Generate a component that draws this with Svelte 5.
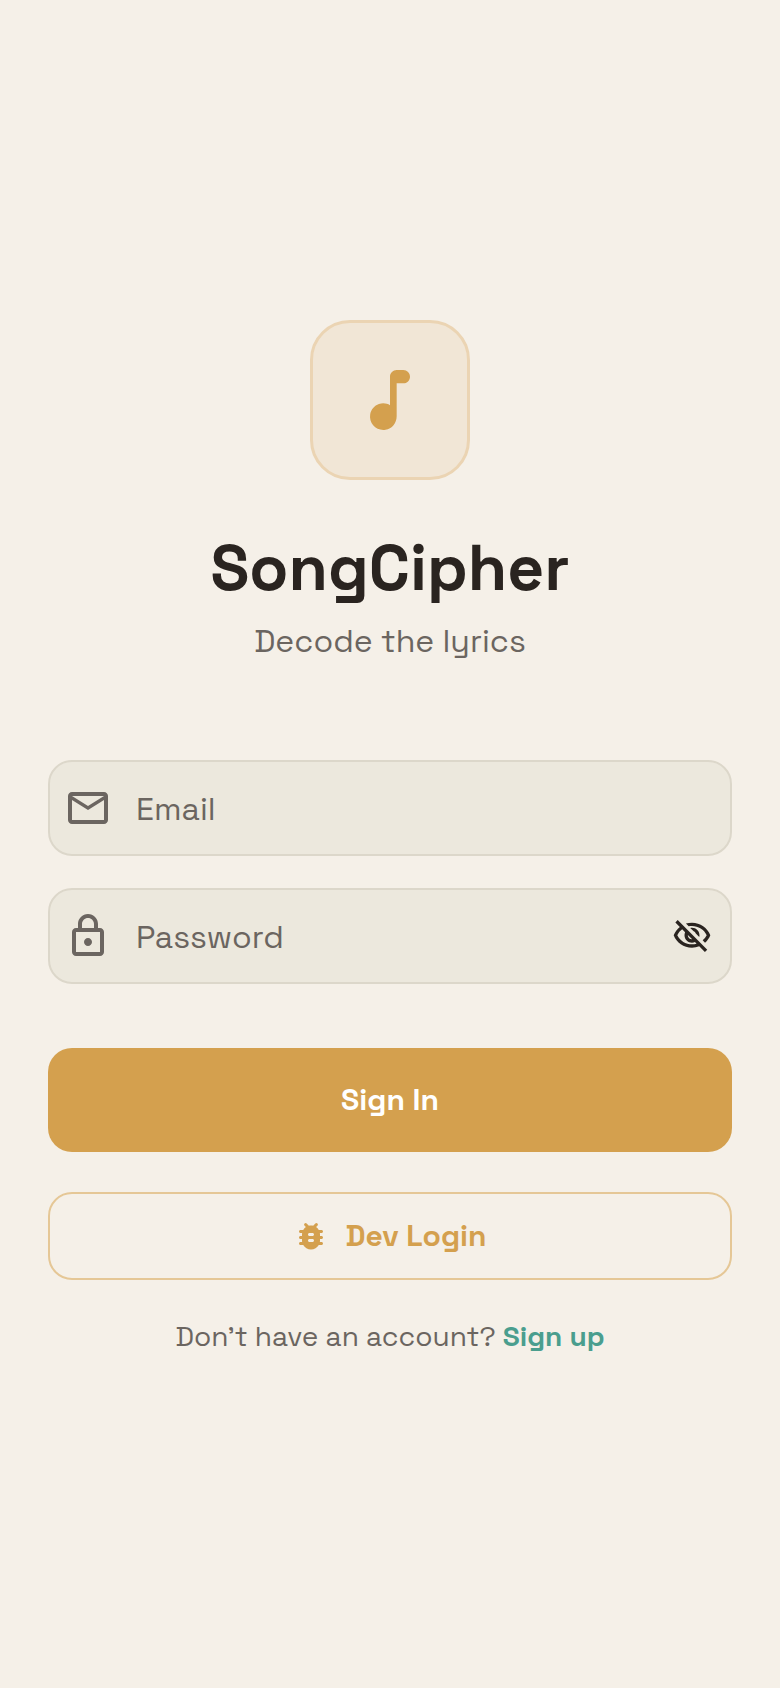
<script lang="ts">
    let email = $state('');
    let password = $state('');
    let visible = $state(false);

    function signIn(event: SubmitEvent) {
        event.preventDefault();
    }
</script>

<main>
    <header>
        <div class="logo">
            <svg viewBox="0 0 24 24" aria-hidden="true">
                <path d="M12 5v8.55c-.94-.54-2.1-.75-3.33-.32-1.34.48-2.37 1.67-2.61 3.07-.46 2.74 1.86 5.08 4.59 4.65 1.96-.31 3.35-2.11 3.35-4.1V7h2c1.1 0 2-.9 2-2s-.9-2-2-2h-2c-1.1 0-2 .9-2 2z" />
            </svg>
        </div>
        <h1>SongCipher</h1>
        <p class="tagline">Decode the lyrics</p>
    </header>

    <form onsubmit={signIn}>
        <div class="field">
            <svg viewBox="0 0 24 24" aria-hidden="true">
                <path d="M22 6c0-1.1-.9-2-2-2H4c-1.1 0-2 .9-2 2v12c0 1.1.9 2 2 2h16c1.1 0 2-.9 2-2V6zm-2 0l-8 5-8-5h16zm0 12H4V8l8 5 8-5v10z" />
            </svg>
            <input type="email" placeholder="Email" aria-label="Email" bind:value={email} />
        </div>

        <div class="field">
            <svg viewBox="0 0 24 24" aria-hidden="true">
                <path d="M18 8h-1V6c0-2.76-2.24-5-5-5S7 3.24 7 6v2H6c-1.1 0-2 .9-2 2v10c0 1.1.9 2 2 2h12c1.1 0 2-.9 2-2V10c0-1.1-.9-2-2-2zM9 6c0-1.66 1.34-3 3-3s3 1.34 3 3v2H9V6zm9 14H6V10h12v10zm-6-3c1.1 0 2-.9 2-2s-.9-2-2-2-2 .9-2 2 .9 2 2 2z" />
            </svg>
            <input
                type={visible ? 'text' : 'password'}
                placeholder="Password"
                aria-label="Password"
                bind:value={password}
            />
            <button
                type="button"
                class="toggle"
                aria-label="Show password"
                aria-pressed={visible}
                onclick={() => (visible = !visible)}
            >
                <svg viewBox="0 0 24 24" aria-hidden="true">
                    <path d="M12 6c3.79 0 7.17 2.13 8.82 5.5-.59 1.22-1.42 2.27-2.41 3.12l1.41 1.41c1.39-1.23 2.49-2.77 3.18-4.53C21.27 7.11 17 4 12 4c-1.27 0-2.49.2-3.64.57l1.65 1.65C10.66 6.09 11.32 6 12 6zm-1.07 1.14L13 9.21c.57.25 1.03.71 1.28 1.28l2.07 2.07c.08-.34.14-.7.14-1.07C16.5 9.01 14.48 7 12 7c-.37 0-.72.05-1.07.14zM2.01 3.87l2.68 2.68C3.06 7.83 1.77 9.53 1 11.5 2.73 15.89 7 19 12 19c1.52 0 2.98-.29 4.32-.82l3.42 3.42 1.41-1.41L3.42 2.45 2.01 3.87zm7.5 7.5l2.61 2.61c-.04.01-.08.02-.12.02-1.38 0-2.5-1.12-2.5-2.5 0-.05.01-.08.01-.13zm-3.4-3.4l1.75 1.75c-.23.55-.36 1.15-.36 1.78 0 2.48 2.02 4.5 4.5 4.5.63 0 1.23-.13 1.77-.36l.98.98c-.88.24-1.8.38-2.75.38-3.79 0-7.17-2.13-8.82-5.5.7-1.43 1.72-2.61 2.93-3.53z" />
                </svg>
            </button>
        </div>

        <button type="submit" class="primary">Sign In</button>
        <button type="button" class="outlined">
            <svg viewBox="0 0 24 24" aria-hidden="true">
                <path d="M19 8h-1.81c-.45-.78-1.07-1.45-1.82-1.96l.93-.93a.996.996 0 1 0-1.41-1.41l-1.47 1.47C12.96 5.06 12.49 5 12 5s-.96.06-1.41.17L9.11 3.7A.996.996 0 1 0 7.7 5.11l.92.93C7.88 6.55 7.26 7.22 6.81 8H5c-.55 0-1 .45-1 1s.45 1 1 1h1.09c-.05.33-.09.66-.09 1v1H5c-.55 0-1 .45-1 1s.45 1 1 1h1v1c0 .34.04.67.09 1H5c-.55 0-1 .45-1 1s.45 1 1 1h1.81c1.04 1.79 2.97 3 5.19 3s4.15-1.21 5.19-3H19c.55 0 1-.45 1-1s-.45-1-1-1h-1.09c.05-.33.09-.66.09-1v-1h1c.55 0 1-.45 1-1s-.45-1-1-1h-1v-1c0-.34-.04-.67-.09-1H19c.55 0 1-.45 1-1s-.45-1-1-1zm-6 8h-2c-.55 0-1-.45-1-1s.45-1 1-1h2c.55 0 1 .45 1 1s-.45 1-1 1zm0-4h-2c-.55 0-1-.45-1-1s.45-1 1-1h2c.55 0 1 .45 1 1s-.45 1-1 1z" />
            </svg>
            Dev Login
        </button>
    </form>

    <p class="signup">Don’t have an account? <a href="#signup">Sign up</a></p>
</main>

<style>
    :global(body) {
        margin: 0;
        background: #f5f0e8;
    }

    main {
        display: flex;
        flex-direction: column;
        justify-content: center;
        box-sizing: border-box;
        min-height: 100vh;
        padding: 48px;
        color: #6b6560;
        font-family: 'Space Grotesk', Inter, sans-serif;
    }

    svg {
        display: block;
        flex: none;
        fill: currentColor;
    }

    header {
        display: flex;
        flex-direction: column;
        align-items: center;
        margin-bottom: 98px;
    }

    .logo {
        padding: 37px;
        border: 3px solid #ebd4b3;
        border-radius: 40px;
        background: #f1e6d6;
        color: #d4a04e;
    }

    .logo svg {
        width: 80px;
        height: 80px;
    }

    h1 {
        margin: 48px 0 12px;
        color: #2a2420;
        font-size: 64px;
        font-weight: 700;
        line-height: 80px;
    }

    .tagline {
        margin: 0;
        font-size: 32px;
        line-height: 42px;
    }

    form {
        display: flex;
        flex-direction: column;
    }

    .field {
        display: flex;
        align-items: center;
        box-sizing: border-box;
        height: 96px;
        margin-bottom: 32px;
        padding: 0 18px 0 14px;
        border: 2px solid #dcd7ca;
        border-radius: 24px;
        background: #ece8dd;
    }

    .field svg {
        width: 48px;
        height: 48px;
    }

    .field:focus-within {
        border-color: #d4a04e;
    }

    input {
        flex: 1;
        min-width: 0;
        padding: 2px 0 0 24px;
        border: 0;
        outline: 0;
        background: none;
        color: #2a2420;
        font: inherit;
        font-size: 32px;
        line-height: 40px;
    }

    input::placeholder {
        color: #6b6560;
        opacity: 1;
    }

    button {
        border: 0;
        background: none;
        font: inherit;
        font-size: 30px;
        font-weight: 600;
        line-height: 40px;
        cursor: pointer;
    }

    .field .toggle {
        padding: 0;
        color: #2a2420;
    }

    .field .toggle svg {
        width: 40px;
        height: 40px;
    }

    .primary {
        margin-top: 32px;
        padding: 32px;
        border-radius: 24px;
        background: #d4a04e;
        color: #fff;
    }

    .outlined {
        display: flex;
        align-items: center;
        justify-content: center;
        gap: 16px;
        margin-top: 40px;
        padding: 22px;
        border: 2px solid #e5c796;
        border-radius: 24px;
        color: #d4a04e;
    }

    .outlined svg {
        width: 36px;
        height: 36px;
    }

    .signup {
        margin: 24px 0 0;
        font-size: 28px;
        line-height: 64px;
        text-align: center;
    }

    a {
        color: #4a9e8e;
        font-weight: 700;
        text-decoration: none;
    }
</style>
